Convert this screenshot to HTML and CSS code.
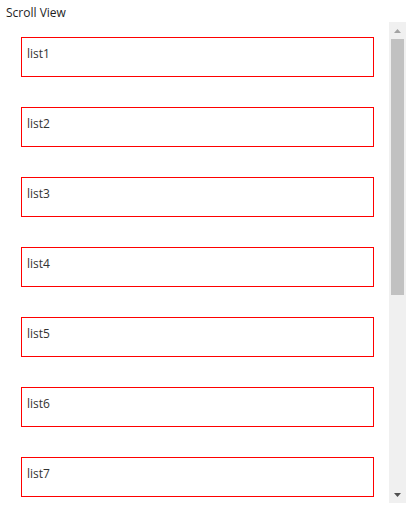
FILE: index.html
```html
<!DOCTYPE html>
<html>
<head>
<meta charset="utf-8">
<link rel="stylesheet" href="styles.css">
</head>
<body>
<div class="title">Scroll View</div>
<div class="scroll">
  <div class="list">
    <div class="item">list1</div>
    <div class="item">list2</div>
    <div class="item">list3</div>
    <div class="item">list4</div>
    <div class="item">list5</div>
    <div class="item">list6</div>
    <div class="item">list7</div>
  </div>
  <div class="bar">
    <div class="btn"><svg width="7" height="4" viewBox="0 0 7 4"><polygon points="3.5,0 7,4 0,4" class="up"/></svg></div>
    <div class="track"><div class="thumb"></div></div>
    <div class="btn"><svg width="7" height="4" viewBox="0 0 7 4"><polygon points="0,0 7,0 3.5,4" class="down"/></svg></div>
  </div>
</div>
</body>
</html>
```
FILE: styles.css
```css
html, body {
  margin: 0;
  padding: 0;
  background: #ffffff;
}
body {
  font-family: "Segoe UI", "Open Sans", "Noto Sans", sans-serif;
  font-size: 12px;
  color: #1e1e1e;
}
.title {
  height: 16px;
  line-height: 16px;
  padding: 5px 0 1px 6px;
}
.scroll {
  display: flex;
  height: 481px;
  margin-right: 4px;
}
.list {
  flex: 1;
  overflow: hidden;
  padding: 15px 15px 0 21px;
  display: flex;
  flex-direction: column;
  gap: 30px;
}
.item {
  flex: none;
  box-sizing: border-box;
  height: 40px;
  border: 1px solid #ff0000;
  padding: 8px 5px 0 5px;
  line-height: 16px;
  color: #333333;
}
.bar {
  width: 17px;
  flex: none;
  background: #f0f0f0;
  display: flex;
  flex-direction: column;
}
.btn {
  height: 17px;
  flex: none;
  display: flex;
  align-items: center;
  justify-content: center;
}
.btn svg {
  display: block;
}
.up { fill: #a3a3a3; }
.down { fill: #505050; }
.track {
  flex: 1;
}
.thumb {
  margin: 0 2px;
  height: 256px;
  background: #c1c1c1;
}
```
